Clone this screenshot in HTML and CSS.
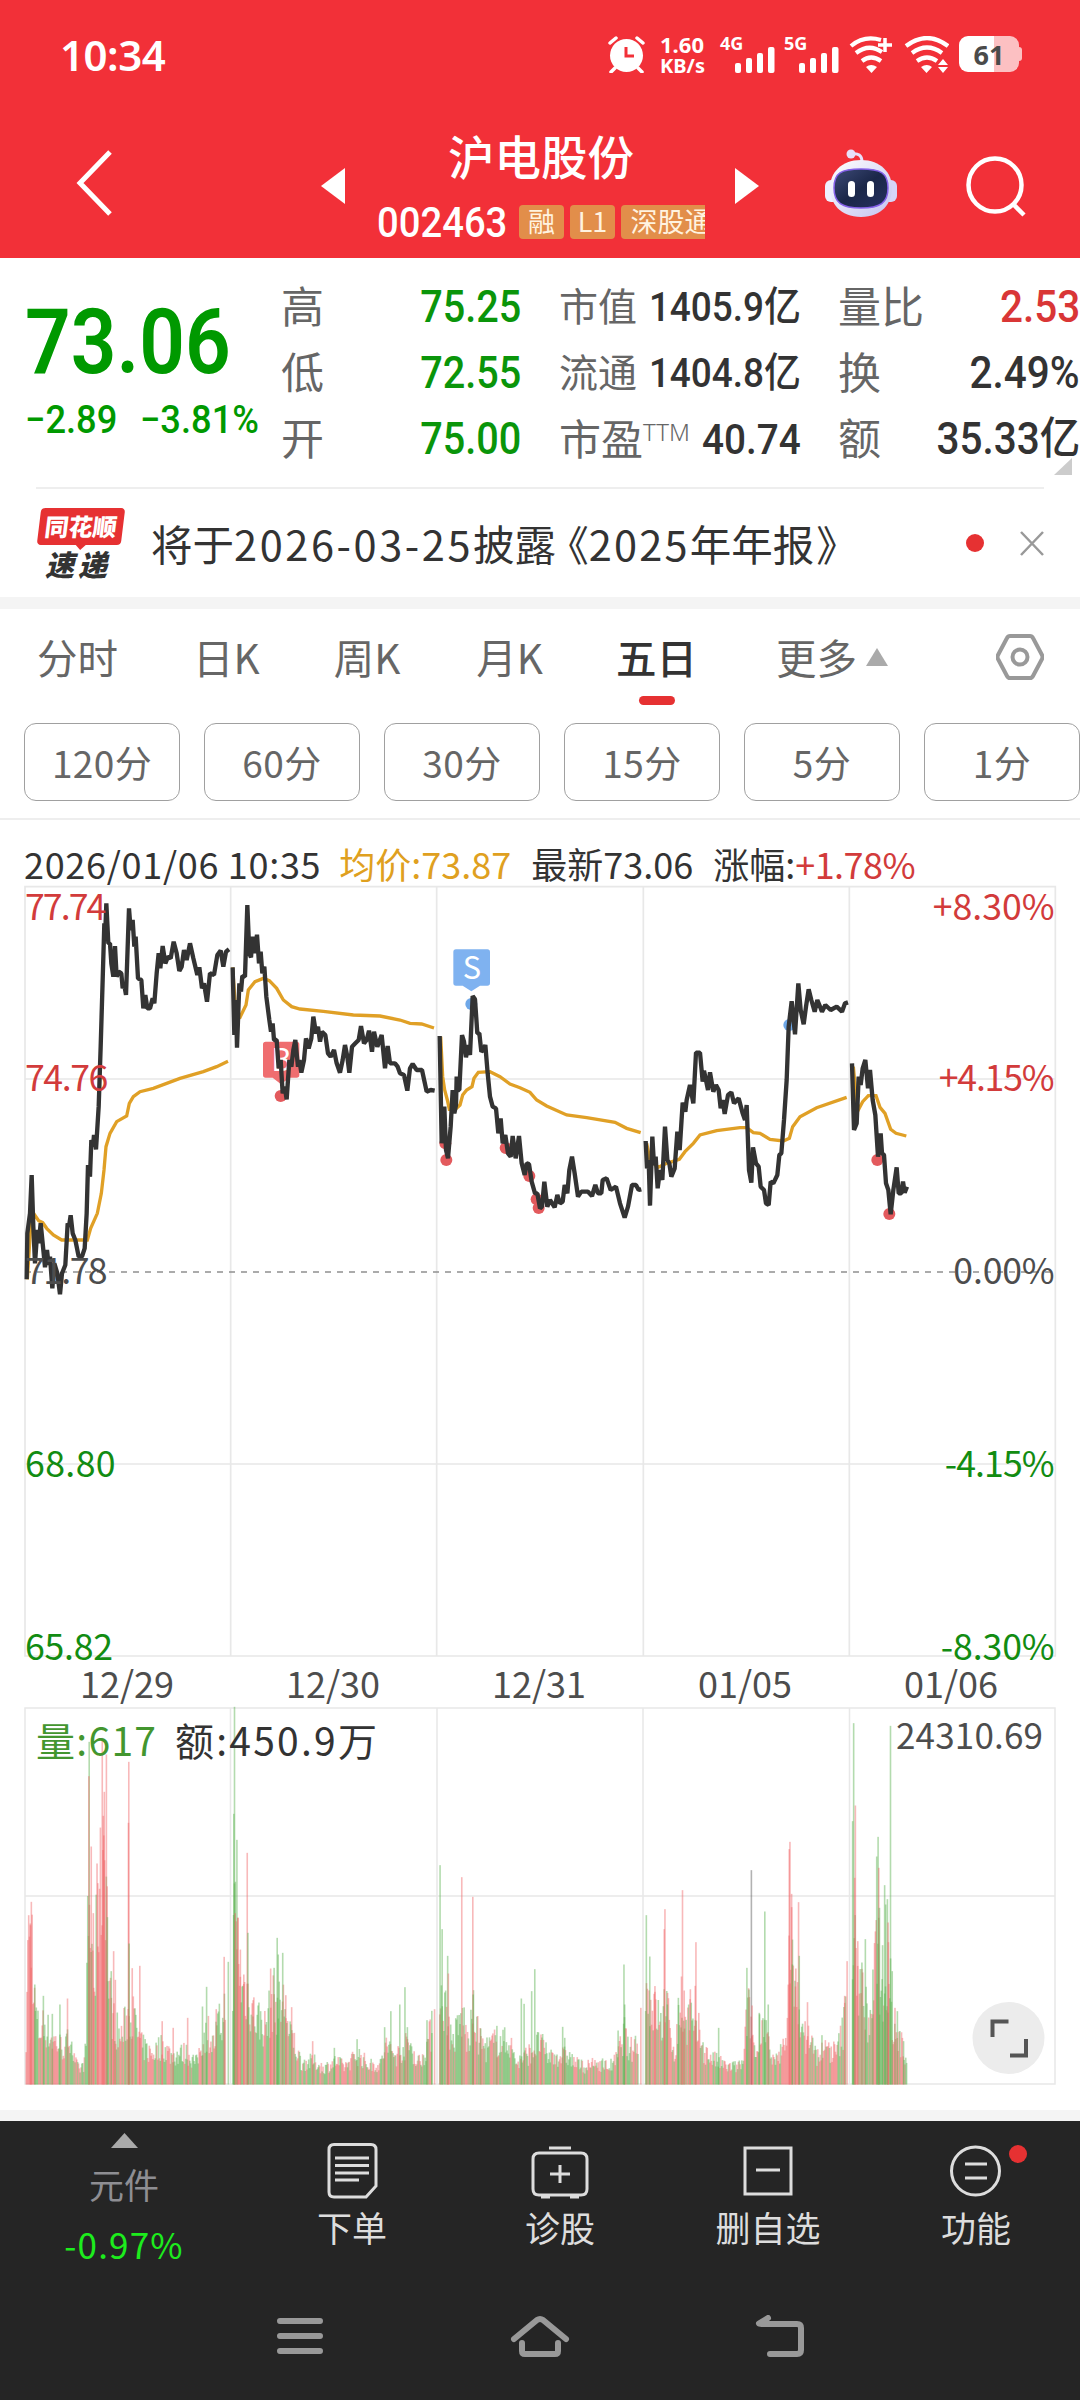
FILE: index.html
```html
<!DOCTYPE html>
<html lang="zh-CN">
<head>
    <meta charset="UTF-8">
    <meta name="viewport" content="width=device-width, initial-scale=1.0">
    <title>沪电股份 002463</title>
    <link rel="stylesheet" href="styles.css">
</head>
<body>
    <header class="top">
        <div class="status-bar">
            <span class="time">10:34</span>
            <div class="status-icons">
                <svg class="alarm" width="37" height="37" viewBox="0 0 37 37">
                    <circle cx="18.500" cy="19.500" r="16.500" fill="#fff"/>
                    <path d="M2 7 8 2M35 7 29 2M7 32 3 36M30 32 34 36" stroke="#fff" stroke-width="3.500" stroke-linecap="round"/>
                    <path d="M18 11v9h8" fill="none" stroke="#f23038" stroke-width="3"/>
                </svg>
                <div class="speed"><span class="rate">1.60</span><span>KB/s</span></div>
                <div class="signal">
                    <span>4G</span>
                    <svg width="40" height="26" viewBox="0 0 40 26" fill="#fff"><rect y="16" width="6" height="10" rx="2"/><rect x="11" y="11" width="6" height="15" rx="2"/><rect x="22" y="6" width="6" height="20" rx="2"/><rect x="33" width="6.500" height="26" rx="2"/></svg>
                </div>
                <div class="signal second">
                    <span>5G</span>
                    <svg width="40" height="26" viewBox="0 0 40 26" fill="#fff"><rect y="16" width="6" height="10" rx="2"/><rect x="11" y="11" width="6" height="15" rx="2"/><rect x="22" y="6" width="6" height="20" rx="2"/><rect x="33" width="6.500" height="26" rx="2"/></svg>
                </div>
                <svg class="wifi" width="45" height="37" viewBox="0 0 45 37">
                    <g fill="none" stroke="#fff" stroke-width="4.200"><path d="M2 10Q15 -1 32 4"/><path d="M7 17Q20 7 33 16"/><path d="M13 25Q22 18 32 25"/></g>
                    <path d="M17 31q5-4 11 0l-5.500 6z" fill="#fff"/>
                    <path d="M36 2v14M29 9h14" stroke="#fff" stroke-width="3.500"/>
                </svg>
                <svg class="wifi" width="45" height="37" viewBox="0 0 45 37">
                    <g fill="none" stroke="#fff" stroke-width="4.200"><path d="M2 10Q23 -6 44 10"/><path d="M8 17Q23 6 38 17"/><path d="M13 25Q23 18 33 25"/></g>
                    <path d="M17 31q6-4 11 0l-5.500 6zM39 23l5 6H34zM39 37l5-6H34z" fill="#fff"/>
                </svg>
                <div class="battery">61</div>
            </div>
        </div>
        <div class="title-bar">
            <svg class="back" width="38" height="66" viewBox="0 0 38 66"><path d="M34 2 4 33 34 64" fill="none" stroke="#fff" stroke-width="5"/></svg>
            <svg class="prev" width="24" height="36" viewBox="0 0 24 36"><path d="M24 0v36L0 18z" fill="#fff"/></svg>
            <div class="stock">
                <h1>沪电股份</h1>
                <div class="stock-line">
                    <span class="code"><span>002463</span></span>
                    <span class="tag">融</span><span class="tag">L1</span><span class="tag last">深股通</span>
                </div>
            </div>
            <svg class="next" width="24" height="36" viewBox="0 0 24 36"><path d="M0 0v36l24-18z" fill="#fff"/></svg>
            <svg class="robot" width="72" height="68" viewBox="0 0 72 68">
                <defs>
                    <linearGradient id="shell" x1="0" y1="0" x2="1" y2="1"><stop offset="0" stop-color="#fff"/><stop offset="1" stop-color="#c4c3f0"/></linearGradient>
                    <linearGradient id="face" x1="0" y1="0" x2="1" y2="1"><stop offset="0" stop-color="#3d4a77"/><stop offset=".5" stop-color="#1b2749"/><stop offset="1" stop-color="#253060"/></linearGradient>
                </defs>
                <path d="M26 5q11-2 11 8" fill="none" stroke="#e8e0fa" stroke-width="3"/>
                <circle cx="26" cy="5" r="4.500" fill="#e8e0fa"/>
                <rect y="31" width="14" height="22" rx="6" fill="#eef0ff"/><rect x="58" y="31" width="14" height="22" rx="6" fill="#d6d4f8"/>
                <path d="M36 11C56 11 67 24 67 39S57 68 36 68 5 54 5 39 16 11 36 11z" fill="url(#shell)"/>
                <path d="M36 20c20 0 27 4 27 19s-8 20-27 20S9 54 9 39s7-19 27-19z" fill="url(#face)" stroke="#8460e8" stroke-width="1.500"/>
                <rect x="23" y="32" width="7" height="16" rx="3.500" fill="#fff"/><rect x="42" y="32" width="7" height="16" rx="3.500" fill="#fff"/>
            </svg>
            <svg class="search" width="62" height="64" viewBox="0 0 62 64"><circle cx="29" cy="30" r="26.500" fill="none" stroke="#fff" stroke-width="4.500"/><path d="M47 49 58 60" stroke="#fff" stroke-width="4.500"/></svg>
        </div>
    </header>

    <section class="quote">
        <div class="price">
            <strong>73.06</strong>
            <div class="change"><span>−2.89</span><span>−3.81%</span></div>
        </div>
        <dl class="col first">
            <dt>高</dt><dd class="down"><span>75.25</span></dd>
            <dt>低</dt><dd class="down"><span>72.55</span></dd>
            <dt>开</dt><dd class="down"><span>75.00</span></dd>
        </dl>
        <dl class="col middle">
            <dt>市值</dt><dd><span>1405.9亿</span></dd>
            <dt>流通</dt><dd><span>1404.8亿</span></dd>
            <dt class="pe">市盈<sup>TTM</sup></dt><dd class="pe"><span>40.74</span></dd>
        </dl>
        <dl class="col end">
            <dt>量比</dt><dd class="up"><span>2.53</span></dd>
            <dt>换</dt><dd><span>2.49%</span></dd>
            <dt>额</dt><dd><span>35.33亿</span></dd>
        </dl>
        <i class="corner"></i>
    </section>

    <section class="news">
        <div class="news-logo"><b>同花顺</b><em>速递</em></div>
        <p>将于<span class="date">2026-03-25</span>披露<span class="book">《</span><span class="year">2025</span>年年报<span class="book close">》</span></p>
        <i class="dot"></i>
        <svg width="24" height="25" viewBox="0 0 24 25"><path d="M1 1l22 23M23 1 1 24" stroke="#999" stroke-width="2.500"/></svg>
    </section>

    <nav class="tabs">
        <span>分时</span><span>日K</span><span>周K</span><span>月K</span><span class="active">五日</span>
        <span class="more">更多<svg width="22" height="18" viewBox="0 0 22 18"><path d="M11 0 22 18H0z" fill="#aaa"/></svg></span>
        <svg class="setting" width="48" height="46" viewBox="0 0 48 46"><path d="M14 2h20q2 0 3 2l9 17q1 2 0 4l-9 17q-1 2-3 2H14q-2 0-3-2L2 25q-1-2 0-4L11 4q1-2 3-2z" fill="none" stroke="#999" stroke-width="4"/><circle cx="24" cy="23" r="7.500" fill="none" stroke="#999" stroke-width="4"/></svg>
    </nav>
    <div class="periods">
        <button>120分</button><button>60分</button><button>30分</button><button>15分</button><button>5分</button><button>1分</button>
    </div>

    <section class="chart">
        <div class="info"><span class="when">2026/01/06 10:35</span><span class="avg">均价:73.87</span><span>最新73.06</span><span>涨幅:<b>+1.78%</b></span></div>
        <svg class="price-chart" width="1080" height="780" viewBox="0 60 3240 2340">
            <g class="grid">
                <path d="M75 80H3166V2388H75zM75 657H3166M75 1812H3166M692 80V2388M1310 80V2388M1930 80V2388M2548 80V2388"/>
                <path class="zero" d="M75 1236H3166"/>
            </g>
            <g id="marks"></g>
            <g class="badge buy"><path d="M797 545h93q8 0 8 8v92q0 8-8 8h-22l-25 20-25-20h-21q-8 0-8-8v-92q0-8 8-8z"/><text x="844" y="633">B</text></g>
            <g class="badge sell"><path d="M1368 268h94q8 0 8 8v93q0 8-8 8h-22l-26 17-26-17h-20q-8 0-8-8v-93q0-8 8-8z"/><text x="1416" y="358">S</text></g>
            <g id="lines"></g>
            <g class="axis">
                <g class="up"><text x="75" y="180" textLength="244">77.74</text><text x="75" y="694" textLength="250">74.76</text><text x="3164" y="180" text-anchor="end" textLength="366">+8.30%</text><text x="3164" y="694" text-anchor="end" textLength="348">+4.15%</text></g>
                <g class="flat"><text x="75" y="1273" textLength="248">71.78</text><text x="3164" y="1273" text-anchor="end" textLength="304">0.00%</text></g>
                <g class="down"><text x="75" y="1850" textLength="272">68.80</text><text x="75" y="2400" textLength="264">65.82</text><text x="3164" y="1850" text-anchor="end" textLength="330">-4.15%</text><text x="3164" y="2400" text-anchor="end" textLength="342">-8.30%</text></g>
            </g>
        </svg>
        <div class="dates"><span>12/29</span><span>12/30</span><span>12/31</span><span>01/05</span><span>01/06</span></div>
        <svg class="volume-chart" width="1080" height="390" viewBox="0 1700 1080 390">
            <path class="frame" d="M25 1708H1055V2084H25zM25 1896H1055M230.500 1708V2084M437 1708V2084M643 1708V2084M849.500 1708V2084"/>
            <g id="volumes"></g>
            <text class="vol" x="36" y="1756" textLength="120">量:617</text>
            <text class="amount" x="175" y="1756" textLength="202">额:450.9万</text>
            <text class="max" x="1043" y="1749" text-anchor="end" textLength="147">24310.69</text>
            <circle cx="1008.500" cy="2038" r="36" fill="#ececec"/>
            <path d="M992.500 2037v-15.500h16M1026 2039v16.500h-16" fill="none" stroke="#555" stroke-width="4"/>
        </svg>
    </section>

    <footer class="bottom">
        <div class="actions">
            <div class="sector"><svg width="27" height="15" viewBox="0 0 27 15"><path d="M13.500 0 27 15H0z" fill="#aaa"/></svg><span>元件</span><b>-0.97%</b></div>
            <div class="action">
                <svg width="58" height="56" viewBox="0 0 58 56"><path d="M11 1.500h37q5 0 5 5V43L43 54H11q-5 0-5-5V6.500q0-5 5-5zM12 15h34M12 22.500h34M12 30h34M12 37h24"/></svg>
                <span>下单</span>
            </div>
            <div class="action">
                <svg width="58" height="56" viewBox="0 0 58 56"><path d="M8 10h42q6 0 6 6v30q0 6-6 6H8q-6 0-6-6V16q0-6 6-6zM18 5h22M29 22v18M19 31h20M10 54h9M39 54h9"/></svg>
                <span>诊股</span>
            </div>
            <div class="action">
                <svg width="58" height="56" viewBox="0 0 58 56"><path d="M6 5h46v46H6zM17 27h24"/></svg>
                <span>删自选</span>
            </div>
            <div class="action">
                <svg width="58" height="56" viewBox="0 0 58 56"><circle cx="28.500" cy="28" r="24"/><path d="M18 21h22M18 35h22"/></svg>
                <span>功能</span><i class="dot"></i>
            </div>
        </div>
        <div class="system">
            <svg width="60" height="46" viewBox="0 0 60 46"><path d="M10 6h40M10 21h40M10 36h40"/></svg>
            <svg width="60" height="46" viewBox="0 0 60 46"><path d="M4 24 27 5q3-2 6 0l23 19M12 28v8q0 3 3 3h30q3 0 3-3v-8"/></svg>
            <svg width="60" height="46" viewBox="0 0 60 46"><path d="M18 3 9 8.500 12 9h35q4 0 4 4v22q0 4-4 4H20"/></svg>
        </div>
    </footer>
    <script src="script.js"></script>
</body>
</html>
```
FILE: styles.css
```css
* {
    box-sizing: border-box;
}
body {
    margin: 0;
    width: 1080px;
    height: 2400px;
    overflow: hidden;
    background: #fff;
    color: #333;
    font-family: 'Noto Sans CJK SC', sans-serif;
}
svg {
    display: block;
    flex: none;
}
.up { color: #d93636; fill: #d23b3b; }
.down { color: #0a950a; fill: #128c12; }
.flat { fill: #4d4d4d; }

/* header */
.top {
    height: 258px;
    background: #f23038;
    color: #fff;
}
.status-bar {
    height: 110px;
    padding: 36px 60px 0;
    display: flex;
    justify-content: space-between;
}
.time {
    font-family: 'Noto Sans', sans-serif;
    font-size: 42px;
    font-weight: 600;
    line-height: 38px;
    letter-spacing: -0.5px;
}
.status-icons {
    display: flex;
    align-items: flex-start;
    font-family: 'Noto Sans', sans-serif;
    font-weight: 700;
}
.speed {
    width: 44px;
    margin: -3px 16px 0 15px;
    font-size: 20px;
    line-height: 22px;
    text-align: center;
}
.speed span {
    display: block;
    white-space: nowrap;
}
.speed .rate { font-size: 22px; }
.signal {
    width: 56px;
    font-size: 18px;
    line-height: 15px;
}
.signal.second {
    margin: 0 9px 0 8px;
}
.signal svg {
    margin: -4px 0 0 15px;
}
.wifi {
    margin-right: 10px;
}
.battery {
    width: 60px;
    height: 36px;
    margin-right: 1px;
    border-radius: 9px;
    background: linear-gradient(90deg, #fff 58%, #fcc0c2 58%);
    color: #4a4a4a;
    font-size: 27px;
    line-height: 37px;
    text-align: center;
    position: relative;
}
.battery::after {
    content: '';
    position: absolute;
    right: -3px;
    top: 11px;
    width: 3px;
    height: 14px;
    border-radius: 0 3px 3px 0;
    background: #fcc0c2;
}
.title-bar {
    height: 148px;
    padding-left: 77px;
    display: flex;
    align-items: flex-start;
}
.back { margin: 40px 207px 0 -1px; }
.prev, .next { margin-top: 58px; }
.stock {
    width: 328px;
    margin: 18px 30px 0 32px;
}
.stock h1 {
    margin: 0;
    font-size: 46.5px;
    font-weight: 500;
    line-height: 54px;
    text-align: center;
}
.stock-line {
    display: flex;
    height: 34px;
    margin-top: 23px;
    overflow-x: clip;
}
.code {
    width: 142px;
    flex: none;
    font-family: Roboto, sans-serif;
    font-size: 42px;
    font-weight: 500;
    line-height: 36px;
}
.code span {
    display: inline-block;
    transform: scaleX(.91);
    transform-origin: left;
}
.tag {
    flex: none;
    width: 45px;
    height: 34px;
    margin-right: 6px;
    border-radius: 4px;
    background: #e28e4a;
    color: #fff3e0;
    font-size: 27px;
    line-height: 32px;
    text-align: center;
}
.tag.last {
    width: 100px;
    margin: 0;
}
.robot { margin: 39px 69px 0 66px; }
.search { margin-top: 45px; }

/* quote */
.quote {
    height: 231px;
    padding: 16px 0 0 28px;
    display: flex;
    position: relative;
}
.quote::after {
    content: '';
    position: absolute;
    left: 36px;
    right: 36px;
    bottom: 0;
    height: 2px;
    background: #eee;
}
.price {
    width: 253px;
    color: #009900;
    font-family: Roboto, sans-serif;
    font-weight: 500;
}
.price strong {
    display: block;
    margin-top: 23px;
    font-size: 91px;
    font-weight: 600;
    line-height: 91px;
    transform: scaleX(.88);
    transform-origin: left;
    margin-left: -3px;
}
.change {
    display: flex;
    justify-content: space-between;
    width: 234px;
    margin: 12px 0 0 -3px;
    font-size: 39px;
    line-height: 40px;
}
.change span { transform: scaleX(.93); transform-origin: left; }
.change span + span { transform-origin: right; }
.col {
    width: 240px;
    margin: 0;
    display: grid;
    grid-template-columns: auto minmax(0, 1fr);
    grid-auto-rows: 66px;
    line-height: 61px;
    white-space: nowrap;
}
.col.middle { width: 242px; margin: 0 37px 0 38px; }
.col.end { width: 242px; }
.col dt {
    font-size: 43px;
    color: #666;
}
.col.middle dt { font-size: 39px; }
.col.middle .pe { font-size: 42px; }
.pe sup {
    font-family: 'Noto Sans', sans-serif;
    font-size: 24px;
    font-weight: 300;
    line-height: 0;
    vertical-align: 14px;
}
.col dd {
    display: flex;
    justify-content: flex-end;
    margin: 0;
    padding-top: 3px;
    font-family: Roboto, 'Noto Sans CJK SC', sans-serif;
    font-size: 44px;
    font-weight: 500;
}
.col.middle dd { font-size: 41px; }
.col.middle dd.pe { font-size: 43px; }
.col dd span {
    transform: scaleX(.9);
    transform-origin: right;
}
.col.end dd span { transform: scaleX(.92); }
.corner {
    position: absolute;
    right: 8px;
    bottom: 14px;
    border-left: 18px solid transparent;
    border-bottom: 17px solid #ccc;
}

/* news */
.news {
    height: 120px;
    padding: 0 36px 0 37px;
    border-bottom: 12px solid #f4f4f4;
    display: flex;
    align-items: center;
}
.news-logo {
    width: 88px;
    height: 71px;
    margin-right: 26px;
    font-style: italic;
    font-weight: 900;
    text-align: center;
    position: relative;
}
.news-logo b {
    display: block;
    width: 84px;
    height: 37px;
    margin-left: 2px;
    border-radius: 4px;
    background: #e63132;
    color: #fff;
    font-size: 24px;
    line-height: 35px;
    transform: skewX(-7deg);
    font-style: normal;
}
.news-logo b::after {
    content: '';
    position: absolute;
    left: 38px;
    top: 36px;
    border: 6px solid transparent;
    border-top-color: #e63132;
}
.news-logo em {
    display: block;
    margin: 2px 6px 0 0;
    font-size: 29px;
    line-height: 32px;
    letter-spacing: 4px;
}
.news p {
    margin: 0 auto 0 0;
    font-size: 41.5px;
    line-height: 60px;
    white-space: nowrap;
}
.news .date { letter-spacing: 2.6px; }
.news .year { letter-spacing: 2.2px; }
.news .book {
    margin-left: 12px;
    font-feature-settings: 'halt';
}
.news .close { margin-left: 2px; }
.dot {
    width: 18px;
    height: 18px;
    border-radius: 50%;
    background: #e63132;
}
.news .dot { margin-right: 36px; }

/* tabs */
.tabs {
    height: 114px;
    padding: 20px 36px 0 37px;
    display: flex;
    font-size: 40.5px;
    line-height: 56px;
    color: #666;
}
.tabs > span { position: relative; margin-right: 75px; }
.tabs > span:nth-child(2) { margin-right: 74px; }
.tabs > span:nth-child(3) { margin-right: 76px; }
.tabs > span:nth-child(4) { margin-right: 73px; }
.tabs .active {
    color: #333;
    font-weight: 500;
}
.tabs > .active:nth-child(5) { margin-right: 79px; }
.tabs .active::after {
    content: '';
    position: absolute;
    left: 50%;
    top: 67px;
    width: 36px;
    height: 9px;
    margin-left: -18px;
    border-radius: 5px;
    background: #e63132;
}
.tabs .more { display: flex; }
.tabs .more svg { margin: 19px 0 0 9px; }
.tabs .setting { margin: 5px 0 0 auto; }
.tabs > span.more { margin-right: 0; }
.periods {
    height: 97px;
    padding-left: 24px;
    border-bottom: 2px solid #eee;
    display: flex;
    gap: 24px;
}
.periods button {
    width: 156px;
    height: 78px;
    flex: none;
    padding: 0;
    border: 1.5px solid #a0a0a0;
    border-radius: 12px;
    background: none;
    color: #666;
    font: 37px 'Noto Sans CJK SC', sans-serif;
    letter-spacing: .4px;
}

/* chart */
.info {
    height: 60px;
    padding: 18px 0 0 24px;
    display: flex;
    gap: 20px;
    font-size: 36px;
    line-height: 50px;
    white-space: nowrap;
}
.info .when { letter-spacing: .7px; margin-right: -2px; }
.info b { color: #d23b3b; font-weight: 400; letter-spacing: -.5px; }
.info .avg { color: #dfa020; }
.grid path, .frame {
    fill: none;
    stroke: #e8e8e8;
    stroke-width: 5;
}
.frame { stroke-width: 1.5; }
.grid .zero {
    stroke: #909090;
    stroke-dasharray: 18 18;
}
#lines { fill: none; }
#lines .avg-line { stroke: #e0a026; stroke-width: 10; }
#lines .price-line { stroke: #333; stroke-width: 13; stroke-linejoin: bevel; }
#marks { opacity: .9; }
.badge text {
    fill: #fff;
    font-size: 92px;
    text-anchor: middle;
}
.buy { fill: #ef6d6f; }
.sell { fill: #7fb2f0; }
.axis text {
    font-size: 107px;
}
.dates {
    height: 40px;
    padding: 0 24px;
    display: grid;
    grid-template-columns: repeat(5, 206px);
    font-size: 36px;
    line-height: 44px;
    color: #4d4d4d;
    text-align: center;
}
.vol { font-size: 39px; fill: #43962f; }
.amount { font-size: 39px; fill: #333; }
.max { font-size: 35px; fill: #4d4d4d; }

/* bottom */
.bottom {
    height: 290px;
    margin-top: 20px;
    border-top: 11px solid #f4f4f4;
    background: #252525;
}
.actions {
    height: 175px;
    display: grid;
    grid-template-columns: 248px repeat(4, 208px);
    color: #ddd;
    font-size: 35px;
    text-align: center;
}
.sector svg { margin: 12px auto 13px; }
.sector span, .sector b {
    display: block;
    font-weight: 400;
    line-height: 46px;
}
.sector span { color: #8e8e93; }
.sector b {
    margin-top: 14px;
    color: #1dec1d;
    letter-spacing: 1.2px;
}
.action { position: relative; }
.action svg {
    margin: 22px auto 3px;
    fill: none;
    stroke: #ddd;
    stroke-width: 3;
}
.action span {
    display: block;
    line-height: 50px;
}
.action .dot {
    position: absolute;
    left: 137px;
    top: 24px;
}
.system {
    display: flex;
    justify-content: center;
    gap: 180px;
    padding-top: 19px;
}
.system svg {
    fill: none;
    stroke: #999;
    stroke-width: 6;
    stroke-linecap: round;
    stroke-linejoin: round;
}
```
FILE: script.js
```js
const NS = 'http://www.w3.org/2000/svg';

function add(parent, tag, attrs) {
    const el = document.createElementNS(NS, tag);
    for (const k in attrs) el.setAttribute(k, attrs[k]);
    document.getElementById(parent).appendChild(el);
}

// one entry per trading day, x is relative to the entry's offset
const days = [
    {
        x: 0,
        price: '80,1258 82,1120 90,1060 95,945 100,1100 105,1210 112,1110 116,1150 122,1090 130,1170 135,1222 141,1170 146,1215 150,1190 157,1285 163,1210 172,1240 180,1303 186,1240 196,1215 203,1090 207,1100 212,1066 218,1120 226,1140 236,1190 246,1190 254,1165 260,1060 264,915 270,950 274,840 279,860 282,825 288,868 296,740 302,560 308,360 313,190 316,210 319,130 325,250 330,250 334,310 340,350 345,258 350,350 356,335 364,340 368,385 372,370 378,405 387,145 392,210 398,180 403,260 407,230 414,355 424,360 430,445 436,405 442,445 450,445 458,415 463,430 470,340 476,280 481,325 488,258 496,310 504,290 512,295 521,245 530,280 538,333 545,320 552,270 560,300 570,250 580,295 592,345 598,322 606,385 612,370 621,425 630,340 642,345 652,285 662,272 670,320 678,275 687,268',
        avg: '82,1258 92,1100 104,1065 116,1082 128,1088 140,1105 160,1125 185,1140 262,1140 272,1105 292,1060 304,1000 312,930 318,860 330,820 350,785 380,768 388,730 400,710 420,695 460,685 540,655 610,635 650,620 684,604'
    },
    {
        x: 0,
        price: '698,322 703,525 708,420 711,563 718,370 723,395 727,348 735,350 742,135 748,280 753,292 758,230 764,280 771,224 777,310 782,275 787,340 793,320 799,410 808,480 813,515 818,490 822,540 830,540 836,625 842,600 848,700 854,680 860,718 868,600 874,620 880,570 886,540 894,620 898,600 904,638 912,600 918,535 926,565 934,535 940,470 948,520 954,500 960,545 966,515 976,525 984,580 992,590 1002,570 1010,610 1020,638 1028,600 1035,555 1042,590 1048,638 1056,560 1066,550 1076,540 1083,498 1092,550 1100,540 1107,512 1116,575 1122,515 1132,560 1145,525 1155,625 1163,558 1170,610 1185,610 1193,620 1200,640 1212,645 1222,692 1230,625 1238,612 1250,630 1266,630 1280,695 1292,690 1304,692',
        avg: '698,322 708,470 720,472 738,435 745,390 765,365 790,355 808,362 830,385 850,420 875,440 900,447 970,454 1060,465 1140,468 1200,480 1230,490 1265,492 1302,504'
    },
    {
        x: 1260,
        price: '59,528 65,850 73,740 78,870 84,895 92,800 98,690 103,760 108,735 110,650 114,690 118,690 126,525 132,545 138,592 144,555 150,585 158,408 165,418 172,520 178,520 184,575 190,570 196,555 203,640 210,710 218,740 228,745 235,820 242,775 248,850 256,825 264,880 272,890 278,828 287,895 297,828 305,910 314,945 320,910 327,912 335,965 345,1000 352,1000 360,1045 366,1040 373,965 382,1040 390,1020 404,1042 412,1005 420,1030 428,1025 434,975 442,1000 448,930 456,890 464,940 474,1010 484,995 504,995 516,1008 526,975 534,1000 544,1000 548,960 560,955 572,990 588,980 600,1030 614,1073 624,1040 636,975 648,975 656,990 664,988',
        avg: '62,530 68,650 74,690 82,720 88,748 106,748 120,735 128,705 140,690 156,680 162,655 175,637 210,635 240,650 270,672 300,683 330,697 350,720 380,738 440,765 500,773 585,787 620,805 662,818'
    },
    {
        x: 1920,
        price: '17,843 21,925 26,900 30,1037 37,830 42,915 47,890 53,985 60,930 67,960 75,800 82,900 88,910 94,950 104,925 112,815 119,870 128,728 136,755 140,720 150,675 160,730 168,578 180,578 188,665 192,632 204,690 210,637 220,695 228,675 236,690 242,745 248,720 254,762 264,705 274,697 282,730 296,715 308,760 315,780 320,735 327,930 334,968 339,862 348,910 356,920 362,980 372,990 378,1030 386,1035 392,965 400,970 412,945 418,885 424,880 432,780 440,660 446,500 455,424 465,523 475,370 482,450 491,493 498,440 506,388 514,420 524,455 532,420 546,455 556,435 572,450 590,440 606,455 615,430 624,427',
        avg: '20,850 30,900 55,922 80,910 118,898 135,875 160,850 180,825 230,812 300,803 320,803 340,818 360,820 390,838 430,843 448,835 458,800 480,770 530,743 620,712'
    },
    {
        x: 1920,
        price: '636,610 642,810 650,790 656,650 662,675 668,625 676,600 684,685 690,630 698,720 706,765 714,890 722,820 726,880 732,885 738,970 745,990 752,1063 760,990 770,922 776,1000 784,1000 789,965 794,998 801,980',
        avg: '640,620 652,755 668,725 685,707 708,707 720,742 735,760 752,808 768,820 799,828'
    }
];
days.forEach(d => {
    const transform = `translate(${d.x} 0)`;
    add('lines', 'polyline', { points: d.avg, transform, class: 'avg-line' });
    add('lines', 'polyline', { points: d.price, transform, class: 'price-line' });
});

const buys = [[842, 708], [1336, 850], [1339, 900], [1517, 864], [1588, 948], [1610, 1018], [1616, 1044], [2632, 900], [2668, 1062]];
const sells = [[1414, 432], [2368, 495]];
buys.forEach(([cx, cy]) => add('marks', 'circle', { cx, cy, r: 18, fill: '#e0494c' }));
sells.forEach(([cx, cy]) => add('marks', 'circle', { cx, cy, r: 18, fill: '#5f9fe6' }));

// volume: outline of each day as [x, height], then single tall minutes
const outlines = [
    [[76, 70], [79, 400], [94, 420], [98, 240], [112, 150], [130, 170], [150, 130], [175, 110], [190, 100], [205, 150], [215, 70], [230, 40], [246, 60], [251, 200], [256, 460], [266, 400], [276, 260], [282, 500], [294, 560], [303, 740], [310, 540], [316, 260], [330, 180], [350, 130], [370, 190], [382, 210], [395, 160], [410, 110], [440, 85], [470, 110], [500, 80], [540, 90], [570, 60], [590, 130], [605, 150], [620, 110], [635, 170], [648, 170], [655, 240]],
    [[676, 330], [682, 480], [694, 370], [702, 270], [720, 260], [735, 200], [755, 180], [770, 160], [790, 230], [810, 220], [830, 230], [838, 130], [848, 140], [860, 100], [875, 60], [910, 65], [940, 45], [975, 65], [1000, 50], [1040, 85], [1070, 55], [1105, 55], [1120, 110], [1150, 80], [1180, 110], [1195, 110], [1210, 60], [1230, 80], [1245, 130], [1256, 150]],
    [[1277, 280], [1290, 230], [1303, 180], [1312, 110], [1330, 160], [1345, 190], [1360, 110], [1375, 200], [1390, 130], [1410, 100], [1440, 120], [1480, 120], [1500, 60], [1540, 90], [1568, 120], [1590, 80], [1620, 80], [1650, 80], [1670, 60], [1700, 50], [1740, 60], [1770, 50], [1790, 70], [1815, 150], [1825, 90], [1850, 120], [1855, 150]],
    [[1875, 260], [1890, 230], [1910, 200], [1922, 150], [1932, 260], [1945, 150], [1960, 90], [1975, 210], [1990, 160], [2005, 220], [2015, 130], [2030, 150], [2045, 90], [2075, 70], [2110, 50], [2140, 50], [2160, 60], [2170, 220], [2182, 170], [2195, 70], [2210, 190], [2225, 160], [2240, 60], [2260, 70], [2275, 110], [2288, 180], [2292, 420], [2298, 440], [2305, 240], [2320, 260], [2330, 130], [2350, 140], [2370, 80], [2400, 100], [2430, 90], [2450, 160], [2457, 240]],
    [[2476, 250], [2479, 600], [2484, 460], [2492, 260], [2510, 250], [2525, 150], [2535, 240], [2545, 360], [2550, 500], [2556, 220], [2565, 270], [2575, 290], [2584, 340], [2592, 170], [2602, 160], [2612, 120], [2625, 100], [2632, 60], [2634, 25]]
];
const spikes = [
    [91, 548, 1], [88, 483, 1], [101, 300, 0], [126, 266, 0], [152, 212, 0], [174, 240, 0], [196, 258, 1],
    [259, 1028, 0], [258, 925, 1], [265, 714, 1], [271, 514, 1], [284, 604, 1], [297, 1040, 1], [303, 878, 1], [309, 990, 1], [300, 806, 1], [312, 502, 0], [323, 340, 0], [330, 400, 1], [335, 314, 1], [374, 968, 1], [373, 785, 1], [375, 423, 0], [384, 349, 1], [406, 356, 1], [471, 190, 1], [503, 170, 1], [545, 200, 1], [588, 234, 0], [600, 293, 0], [628, 226, 1], [651, 383, 1], [663, 368, 0],
    [681, 1133, 0], [679, 812, 0], [688, 734, 0], [683, 514, 1], [691, 500, 1], [698, 323, 1], [708, 330, 1], [718, 695, 1], [720, 455, 0], [735, 253, 1], [786, 348, 1], [796, 350, 0], [805, 440, 0], [808, 390, 0], [821, 395, 0], [830, 268, 1], [847, 232, 1], [908, 130, 1], [971, 110, 0], [1037, 136, 0], [1117, 172, 0], [1135, 220, 0], [1161, 240, 0], [1176, 292, 0], [1183, 172, 0], [1240, 193, 0], [1254, 221, 0], [1262, 226, 1],
    [1278, 658, 0], [1284, 466, 0], [1300, 386, 0], [1302, 333, 1], [1341, 622, 1], [1373, 563, 1], [1374, 270, 0], [1396, 168, 0], [1443, 176, 0], [1514, 258, 0], [1522, 242, 0], [1544, 280, 0], [1553, 346, 0], [1571, 150, 1], [1634, 173, 0], [1640, 140, 0], [1795, 162, 0], [1812, 360, 0], [1814, 240, 0], [1861, 230, 1],
    [1877, 508, 0], [1887, 384, 0], [1902, 278, 1], [1929, 466, 1], [1931, 526, 1], [1938, 240, 0], [1970, 260, 0], [1982, 583, 1], [1979, 324, 1], [1987, 282, 1], [2004, 256, 1], [2021, 427, 1], [2019, 296, 1], [2087, 170, 0], [2169, 350, 0], [2175, 285, 0], [2182, 643, 2], [2184, 237, 1], [2205, 215, 0], [2221, 519, 0], [2231, 240, 0], [2294, 728, 1], [2292, 706, 1], [2299, 532, 1], [2301, 360, 0], [2310, 294, 1], [2319, 547, 1], [2321, 386, 0], [2345, 247, 1], [2387, 148, 0], [2453, 266, 1], [2460, 370, 1],
    [2479, 1084, 0], [2476, 790, 0], [2484, 837, 1], [2482, 620, 1], [2491, 430, 1], [2503, 366, 0], [2513, 436, 0], [2535, 345, 0], [2550, 743, 0], [2546, 684, 0], [2552, 650, 1], [2554, 530, 0], [2563, 418, 0], [2569, 598, 0], [2572, 540, 0], [2577, 556, 0], [2579, 486, 1], [2580, 427, 1], [2586, 1076, 0], [2591, 340, 0], [2599, 230, 1], [2606, 220, 0], [2624, 130, 0]
];
const colors = ['#56b04c', '#f06466', '#555'];
const KX = 2.904;

let seed = 7;
function rnd() {
    seed = (seed * 16807) % 2147483647;
    return seed / 2147483647;
}
function bar(x, h, c) {
    h = h / 3;
    add('volumes', 'rect', { x: x / KX - 0.8, y: 2084.5 - h, width: 1.6, height: h, fill: colors[c], opacity: 0.45 });
}
outlines.forEach((pts, day) => {
    let red = true;
    for (let x = pts[0][0], i = 0; x <= pts[pts.length - 1][0]; x += 2.45) {
        while (x > pts[i + 1][0]) i++;
        const t = (x - pts[i][0]) / (pts[i + 1][0] - pts[i][0]);
        const h = pts[i][1] + (pts[i + 1][1] - pts[i][1]) * t;
        if (rnd() < 0.45) red = !red;
        const rally = (x > 280 && x < 305) || (x > 2275 && x < 2300) || x < 92;
        bar(x, h * (0.65 + rnd() * 0.8), rally || red ? 1 : 0);
    }
});
spikes.forEach(s => bar(s[0], s[1], s[2]));
```
